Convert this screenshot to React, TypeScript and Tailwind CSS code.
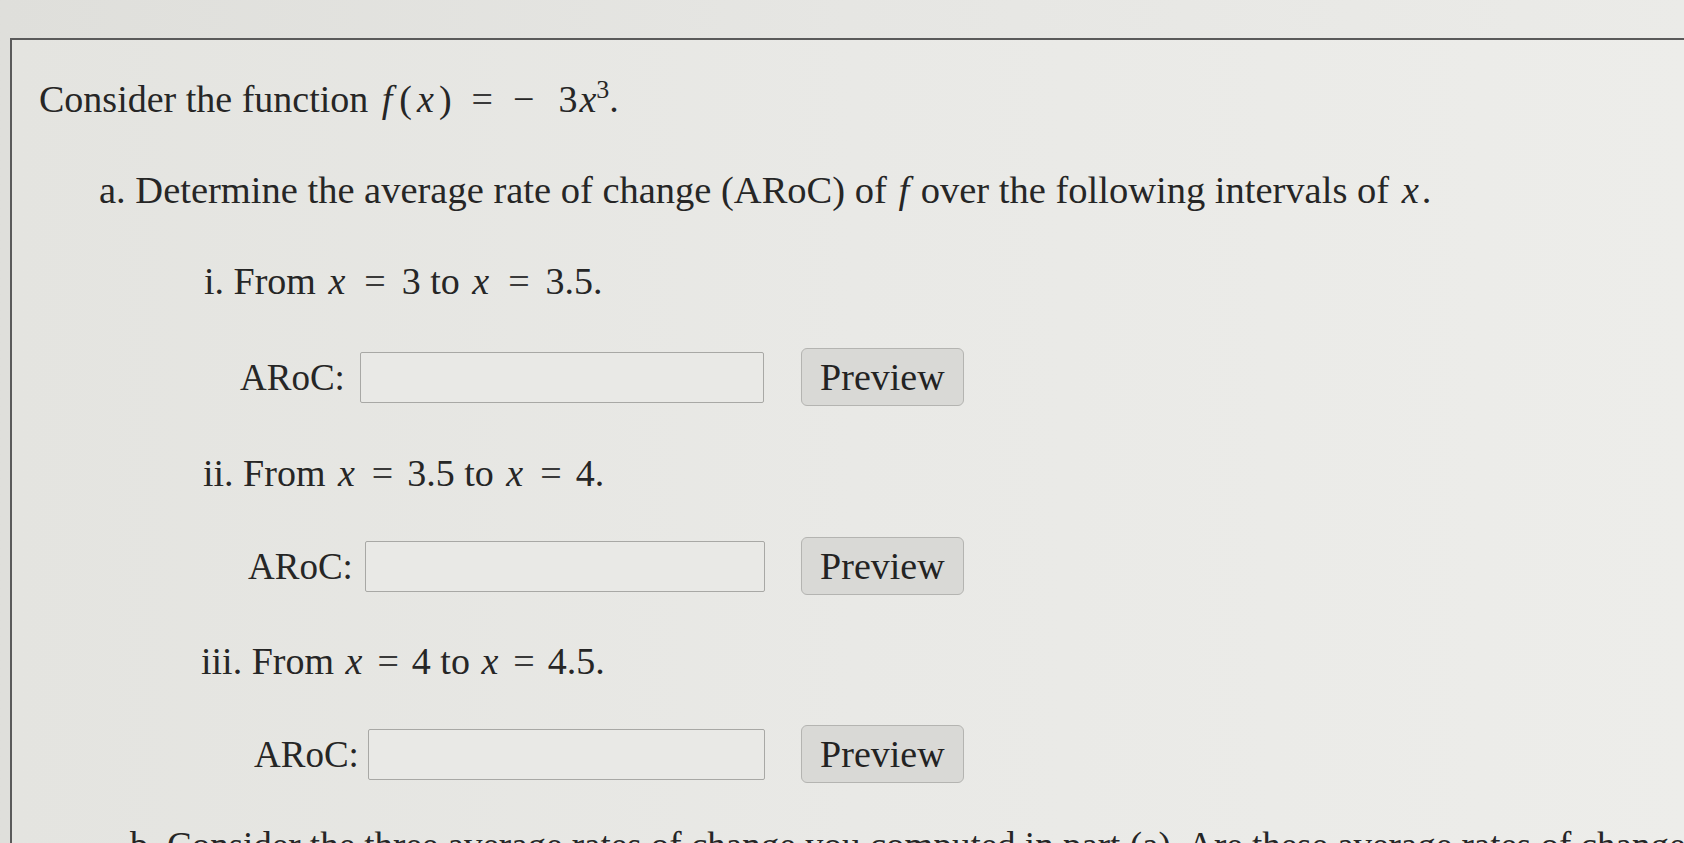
import React from "react";

const serif = { fontFamily: '"Liberation Serif", "Times New Roman", serif' };

function V({ children, cls = "px-[3px]" }: { children: React.ReactNode; cls?: string }) {
  return <span className={`italic ${cls}`}>{children}</span>;
}

function Eq({ cls = "mx-[16px]" }: { cls?: string }) {
  return <span className={`text-[#3a3a3a] ${cls}`}>=</span>;
}

function Row({
  pl,
  gapInput,
  inputW,
  gapBtn,
}: {
  pl: string;
  gapInput: string;
  inputW: string;
  gapBtn: string;
}) {
  return (
    <div className={`flex h-[58px] items-center ${pl}`}>
      <span className="text-[37px] leading-none">ARoC:</span>
      <div
        className={`h-[51px] rounded-[2px] border-[1.5px] border-[#a8a8a5] bg-[#e9e9e6] ${inputW} ${gapInput}`}
      />
      <button
        className={`flex h-[58px] w-[163px] items-center justify-center rounded-[6px] border border-[#b4b4b1] bg-[#d9d9d6] text-[38px] leading-none text-[#232323] ${gapBtn}`}
        style={serif}
      >
        Preview
      </button>
    </div>
  );
}

export default function App() {
  return (
    <div
      className="h-[843px] w-full overflow-hidden bg-gradient-to-r from-[#dfdfdb] via-[#e6e6e3] to-[#ebebe8] pt-[38px] pl-[10px]"
      style={serif}
    >
      <div className="h-[900px] border-l-2 border-t-2 border-[#5a5a5a] bg-gradient-to-r from-[#e4e4e0] via-[#e9e9e6] to-[#ededea] text-[#262626]">
        <div className="mt-[39px] h-[40px] pl-[27px] text-[38px] leading-[40px] whitespace-nowrap">
          Consider the function <V cls="ml-[4px] mr-[5px]">f</V>
          <span className="px-[2px]">(</span>
          <V>x</V>
          <span className="px-[2px]">)</span>
          <Eq cls="mx-[18px]" />
          <span className="ml-[2px] mr-[24px]">−</span>3<V cls="pl-[2px]">x</V>
          <span className="relative -top-[14px] text-[26px]">3</span>.
        </div>
        <div className="mt-[51px] h-[40px] pl-[87px] text-[38.5px] leading-[40px] whitespace-nowrap">
          a. Determine the average rate of change (ARoC) of <V cls="px-[2px]">f</V> over the
          following intervals of <V cls="px-[3px]">x</V>.
        </div>
        <div className="mt-[51px] h-[40px] pl-[192px] text-[38px] leading-[40px] whitespace-nowrap">
          i. From <V>x</V>
          <Eq />3 to <V>x</V>
          <Eq />3.5.
        </div>
        <div className="mt-[47px]">
          <Row pl="pl-[228px]" gapInput="ml-[15px]" inputW="w-[404px]" gapBtn="ml-[37px]" />
        </div>
        <div className="mt-[47px] h-[40px] pl-[191px] text-[38px] leading-[40px] whitespace-nowrap">
          ii. From <V>x</V>
          <Eq cls="mx-[14px]" />3.5 to <V>x</V>
          <Eq cls="mx-[14px]" />4.
        </div>
        <div className="mt-[44px]">
          <Row pl="pl-[236px]" gapInput="ml-[12px]" inputW="w-[400px]" gapBtn="ml-[36px]" />
        </div>
        <div className="mt-[46px] h-[40px] pl-[189px] text-[38px] leading-[40px] whitespace-nowrap">
          iii. From <V cls="px-[2px]">x</V>
          <Eq cls="mx-[13px]" />4 to <V cls="px-[2px]">x</V>
          <Eq cls="mx-[13px]" />4.5.
        </div>
        <div className="mt-[44px]">
          <Row pl="pl-[242px]" gapInput="ml-[9px]" inputW="w-[397px]" gapBtn="ml-[36px]" />
        </div>
        <div className="mt-[43px] h-[40px] pl-[118px] text-[37px] leading-[40px] whitespace-nowrap">
          b. Consider the three average rates of change you computed in part (a). Are these
          average rates of change
        </div>
      </div>
    </div>
  );
}
